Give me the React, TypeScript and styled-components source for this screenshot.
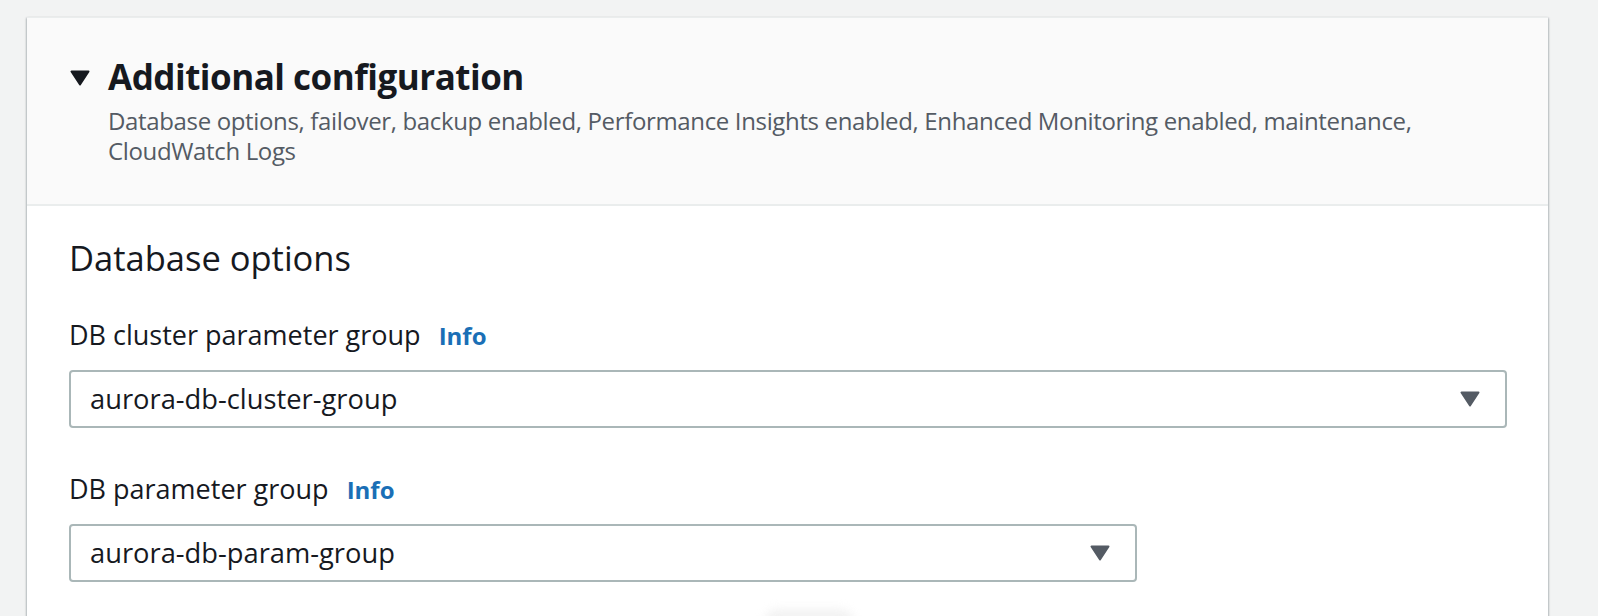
import React from "react";
import styled, { createGlobalStyle } from "styled-components";

const GlobalStyle = createGlobalStyle`
  html, body {
    margin: 0;
    padding: 0;
    background: #f2f3f3;
    font-family: "Open Sans", "Noto Sans", Arial, sans-serif;
    color: #16191f;
    -webkit-font-smoothing: antialiased;
  }
`;

type Field = {
  label: string;
  value: string;
  width?: number;
};

const fields: Field[] = [
  { label: "DB cluster parameter group", value: "aurora-db-cluster-group" },
  { label: "DB parameter group", value: "aurora-db-param-group", width: 1068 },
];

function Caret({ color, size }: { color: string; size: number }) {
  return (
    <svg width={size} height={size * 0.8} viewBox="0 0 20 16" aria-hidden>
      <path
        d="M1.5 1.5 H18.5 L10 14.5 Z"
        fill={color}
        stroke={color}
        strokeWidth="2"
        strokeLinejoin="round"
      />
    </svg>
  );
}

function SelectField({ label, value, width }: Field) {
  return (
    <FieldBlock>
      <LabelRow>
        <Label>{label}</Label>
        <InfoLink href="#">Info</InfoLink>
      </LabelRow>
      <SelectBox $width={width}>
        <SelectValue>{value}</SelectValue>
        <Caret color="#545b64" size={20} />
      </SelectBox>
    </FieldBlock>
  );
}

export default function App() {
  return (
    <>
      <GlobalStyle />
      <Page>
        <Card>
          <Header>
            <ToggleIcon>
              <Caret color="#16191f" size={20} />
            </ToggleIcon>
            <HeaderText>
              <Title>Additional configuration</Title>
              <Description>
                Database options, failover, backup enabled, Performance
                Insights enabled, Enhanced Monitoring enabled, maintenance,
                CloudWatch Logs
              </Description>
            </HeaderText>
          </Header>
          <Body>
            <SectionTitle>Database options</SectionTitle>
            <Fields>
              {fields.map((f) => (
                <SelectField key={f.label} {...f} />
              ))}
            </Fields>
            <FadedChip />
          </Body>
        </Card>
      </Page>
    </>
  );
}

const Page = styled.div`
  padding: 17px 50px 0 27px;
  min-height: 599px;
`;

const Card = styled.section`
  background: #ffffff;
  box-shadow: 0 1px 2px 0 rgba(0, 28, 36, 0.3),
    1px 1px 2px 0 rgba(0, 28, 36, 0.15), -1px 1px 2px 0 rgba(0, 28, 36, 0.15);
  border-top: 1px solid #eaeded;
`;

const Header = styled.header`
  display: flex;
  align-items: flex-start;
  gap: 18px;
  padding: 37px 40px 38px 43px;
  background: #fafafa;
  border-bottom: 2px solid #eaeded;
`;

const ToggleIcon = styled.span`
  display: flex;
  align-items: center;
  height: 44px;
  padding-top: 2px;
  box-sizing: border-box;
`;

const HeaderText = styled.div`
  display: flex;
  flex-direction: column;
  gap: 7px;
`;

const Title = styled.h2`
  margin: 0;
  font-size: 35px;
  line-height: 44px;
  font-weight: 700;
  letter-spacing: -0.5px;
  color: #16191f;
`;

const Description = styled.p`
  margin: 0;
  max-width: 1340px;
  font-size: 24px;
  line-height: 30px;
  letter-spacing: -0.35px;
  color: #545b64;
`;

const Body = styled.div`
  padding: 30px 41px 0 42px;
`;

const SectionTitle = styled.h3`
  margin: 0;
  font-size: 34.5px;
  line-height: 44px;
  font-weight: 400;
  color: #16191f;
`;

const Fields = styled.div`
  display: flex;
  flex-direction: column;
  gap: 44px;
  margin-top: 38px;
`;

const FieldBlock = styled.div`
  display: flex;
  flex-direction: column;
  gap: 17px;
`;

const LabelRow = styled.div`
  display: flex;
  align-items: baseline;
  gap: 18px;
`;

const Label = styled.label`
  font-size: 27px;
  line-height: 34px;
  color: #16191f;
`;

const InfoLink = styled.a`
  font-size: 24px;
  line-height: 34px;
  font-weight: 700;
  color: #1a6fb6;
  text-decoration: none;
`;

const SelectBox = styled.div<{ $width?: number }>`
  display: flex;
  align-items: center;
  justify-content: space-between;
  box-sizing: border-box;
  height: 58px;
  width: ${(p) => (p.$width ? `${p.$width}px` : "100%")};
  padding: 0 25px 0 19px;
  border: 2px solid #aab7b8;
  border-radius: 4px;
  background: #ffffff;
`;

const SelectValue = styled.span`
  font-size: 27.3px;
  line-height: 54px;
  color: #16191f;
`;

const FadedChip = styled.div`
  width: 90px;
  height: 30px;
  margin: 27px 0 0 695px;
  border-radius: 14px;
  background: #ededed;
  filter: blur(5px);
  opacity: 0.7;
`;
